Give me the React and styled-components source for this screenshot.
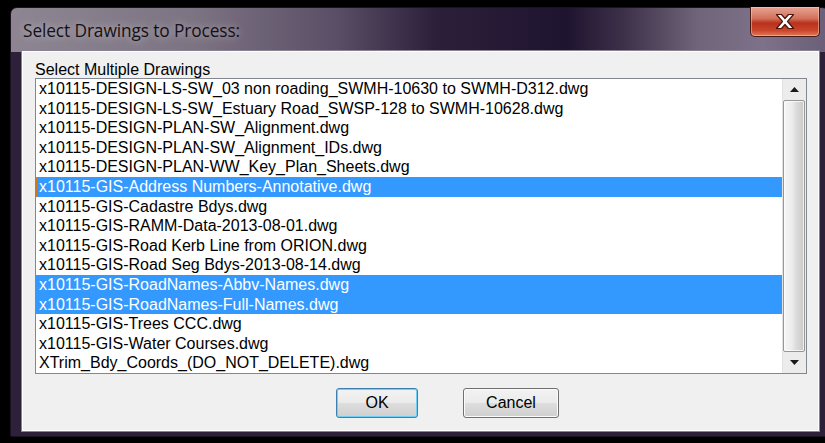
import React from "react";
import styled, { createGlobalStyle } from "styled-components";

const Global = createGlobalStyle`
  html, body { margin: 0; padding: 0; background: #000; }
  body { font-family: "Liberation Sans", Arial, sans-serif; }
`;

const Screen = styled.div`
  width: 825px;
  height: 443px;
  overflow: hidden;
  background: #000;
  padding: 7px 0 0 10px;
  box-sizing: border-box;
`;

const Frame = styled.div`
  width: 819px;
  height: 430px;
  box-sizing: border-box;
  border-radius: 7px 7px 2px 2px;
  border: 1px solid #1a1222;
  background:
    linear-gradient(90deg, #8d8692 0%, #7d7483 22%, #5a4e66 40%, #2c1f3a 52%, #1f1430 68%, #3d3049 75%, #6f6479 84%, #7d7289 92%, #6a5e78 100%) top / 100% 44px no-repeat,
    #2d2039;
  padding: 0 8px 4px 10px;
  display: flex;
  flex-direction: column;
`;

const TitleBar = styled.div`
  height: 42px;
  display: flex;
  align-items: flex-start;
`;

const Title = styled.div`
  padding: 11px 0 0 2px;
  font-family: "Open Sans", "Noto Sans", sans-serif;
  font-size: 17.3px;
  letter-spacing: -0.1px;
  color: #151016;
  text-shadow: 0 0 8px rgba(255, 255, 255, 0.55);
`;

const CloseButton = styled.div`
  margin-left: auto;
  margin-top: -1px;
  width: 70px;
  height: 30px;
  box-sizing: border-box;
  border: 1px solid #4a1a14;
  border-top: none;
  border-radius: 0 0 5px 5px;
  background: linear-gradient(180deg, #e8a594 0%, #d2705a 40%, #b8321c 55%, #c8442a 80%, #e07a58 100%);
  box-shadow: inset 0 0 0 1px rgba(255, 220, 200, 0.45);
  display: flex;
  align-items: center;
  justify-content: center;
`;

const Client = styled.div`
  flex: 1;
  background: #f0f0f0;
  border: 1px solid #8a8193;
  box-shadow: inset 0 0 0 1px #ffffff;
  display: flex;
  flex-direction: column;
  padding: 10px 12px 13px 13px;
`;

const Label = styled.div`
  font-size: 16px;
  color: #000;
  height: 17px;
  line-height: 17px;
`;

const ListBox = styled.div`
  border: 1px solid #828790;
  background: #fff;
  display: flex;
  height: 294px;
`;

const Rows = styled.div`
  flex: 1;
  display: flex;
  flex-direction: column;
`;

const Row = styled.div`
  height: 19.6px;
  line-height: 19.6px;
  padding-left: 3px;
  font-size: 16px;
  white-space: nowrap;
  color: ${(p) => (p.$selected ? "#fff" : "#000")};
  background: ${(p) => (p.$selected ? "#3399ff" : "transparent")};
  outline: ${(p) => (p.$focused ? "1px dotted #d07a1c" : "none")};
  outline-offset: -1px;
`;

const ScrollBar = styled.div`
  width: 23px;
  background: #ececec;
  border-left: 1px solid #e2e2e2;
  display: flex;
  flex-direction: column;
  align-items: stretch;
`;

const Arrow = styled.div`
  height: 21px;
  display: flex;
  align-items: center;
  justify-content: center;
`;

const Thumb = styled.div`
  flex: 1;
  margin: 0 1px 0 0;
  border: 1px solid #979797;
  border-radius: 2px;
  background: linear-gradient(90deg, #f6f6f6 0%, #ececec 40%, #dcdcdc 60%, #c9c9c9 100%);
  box-shadow: inset 0 0 0 1px rgba(255, 255, 255, 0.7);
`;

const ButtonRow = styled.div`
  display: flex;
  gap: 45px;
  padding-left: 301px;
  margin-top: 14px;
`;

const Button = styled.div`
  width: ${(p) => p.$w}px;
  height: 30px;
  box-sizing: border-box;
  border-radius: 3px;
  border: 1px solid ${(p) => (p.$default ? "#3c7fb1" : "#707070")};
  box-shadow: inset 0 0 0 1px ${(p) => (p.$default ? "#6fd0f4" : "#fbfbfb")};
  background: linear-gradient(180deg, #f2f2f2 0%, #ebebeb 48%, #dddddd 52%, #cfcfcf 100%);
  display: flex;
  align-items: center;
  justify-content: center;
  font-size: 16px;
  color: #000;
`;

const files = [
  "x10115-DESIGN-LS-SW_03 non roading_SWMH-10630 to SWMH-D312.dwg",
  "x10115-DESIGN-LS-SW_Estuary Road_SWSP-128 to SWMH-10628.dwg",
  "x10115-DESIGN-PLAN-SW_Alignment.dwg",
  "x10115-DESIGN-PLAN-SW_Alignment_IDs.dwg",
  "x10115-DESIGN-PLAN-WW_Key_Plan_Sheets.dwg",
  "x10115-GIS-Address Numbers-Annotative.dwg",
  "x10115-GIS-Cadastre Bdys.dwg",
  "x10115-GIS-RAMM-Data-2013-08-01.dwg",
  "x10115-GIS-Road Kerb Line from ORION.dwg",
  "x10115-GIS-Road Seg Bdys-2013-08-14.dwg",
  "x10115-GIS-RoadNames-Abbv-Names.dwg",
  "x10115-GIS-RoadNames-Full-Names.dwg",
  "x10115-GIS-Trees CCC.dwg",
  "x10115-GIS-Water Courses.dwg",
  "XTrim_Bdy_Coords_(DO_NOT_DELETE).dwg",
];

const selected = new Set([5, 10, 11]);
const focused = 5;

export default function App() {
  return (
    <>
      <Global />
      <Screen>
        <Frame>
          <TitleBar>
            <Title>Select Drawings to Process:</Title>
            <CloseButton>
              <svg width="22" height="17" viewBox="0 0 22 17">
                <path
                  d="M2.5 1.5 L7.5 1.5 L11 5.5 L14.5 1.5 L19.5 1.5 L13.5 8.5 L19.5 15.5 L14.5 15.5 L11 11.5 L7.5 15.5 L2.5 15.5 L8.5 8.5 Z"
                  fill="#ffffff"
                  stroke="#4a160c"
                  strokeWidth="1.2"
                  strokeLinejoin="round"
                />
              </svg>
            </CloseButton>
          </TitleBar>
          <Client>
            <Label>Select Multiple Drawings</Label>
            <ListBox>
              <Rows>
                {files.map((f, i) => (
                  <Row key={f} $selected={selected.has(i)} $focused={i === focused}>
                    {f}
                  </Row>
                ))}
              </Rows>
              <ScrollBar>
                <Arrow>
                  <svg width="9" height="5" viewBox="0 0 9 5">
                    <path d="M0 5 L4.5 0 L9 5 Z" fill="#1a1a1a" />
                  </svg>
                </Arrow>
                <Thumb />
                <Arrow>
                  <svg width="9" height="5" viewBox="0 0 9 5">
                    <path d="M0 0 L9 0 L4.5 5 Z" fill="#1a1a1a" />
                  </svg>
                </Arrow>
              </ScrollBar>
            </ListBox>
            <ButtonRow>
              <Button $w={82} $default>OK</Button>
              <Button $w={96}>Cancel</Button>
            </ButtonRow>
          </Client>
        </Frame>
      </Screen>
    </>
  );
}
